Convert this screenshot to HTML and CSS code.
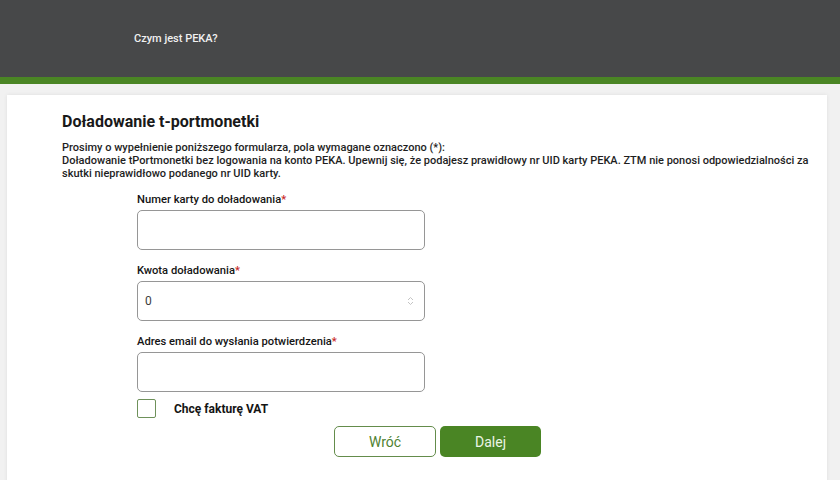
FILE: index.html
```html
<!DOCTYPE html>
<html lang="pl">
<head>
    <meta charset="UTF-8">
    <meta name="viewport" content="width=device-width, initial-scale=1.0">
    <title>Doładowanie t-portmonetki</title>
    <link rel="stylesheet" href="styles.css">
</head>
<body>
    <!-- nagłówek -->
    <header class="top">
        <a class="top-link" href="#">Czym jest PEKA?</a>
    </header>
    <div class="stripe"></div>

    <div class="page">
        <div class="card">
            <h1 class="title">Doładowanie t-portmonetki</h1>
            <p class="info">
                Prosimy o wypełnienie poniższego formularza, pola wymagane oznaczono (*):<br>
                Doładowanie tPortmonetki bez logowania na konto PEKA. Upewnij się, że podajesz prawidłowy nr UID karty PEKA. ZTM nie ponosi odpowiedzialności za skutki nieprawidłowo podanego nr UID karty.
            </p>
            <form class="form">
                <div class="field">
                    <label class="label">Numer karty do doładowania<span class="req">*</span></label>
                    <input class="input" type="text">
                </div>
                <div class="field">
                    <label class="label">Kwota doładowania<span class="req">*</span></label>
                    <div class="input number">
                        <span>0</span>
                        <span class="spin">
                            <svg width="7" height="10" viewBox="0 0 7 10"><path d="M1 4 L3.5 1.5 L6 4 M1 6 L3.5 8.5 L6 6" fill="none" stroke="#c4c4c4" stroke-width="1"/></svg>
                        </span>
                    </div>
                </div>
                <div class="field">
                    <label class="label">Adres email do wysłania potwierdzenia<span class="req">*</span></label>
                    <input class="input" type="text">
                </div>
                <label class="check">
                    <span class="box"></span>
                    <span>Chcę fakturę VAT</span>
                </label>
                <div class="buttons">
                    <button class="btn back" type="button">Wróć</button>
                    <button class="btn next" type="button">Dalej</button>
                </div>
            </form>
        </div>
    </div>
</body>
</html>
```

FILE: styles.css
```css
*{
    padding: 0;
    margin: 0;
    box-sizing: border-box;
}
body{
    width: 840px;
    height: 480px;
    overflow: hidden;
    background-color: rgb(241, 241, 241);
    font-family: Roboto, "Liberation Sans", sans-serif;
    color: rgb(20, 20, 20);
}
.top{
    height: 77px;
    background-color: rgb(71, 72, 73);
    padding: 27px 0 0 134px;
}
.top-link{
    color: rgb(240, 240, 240);
    font-size: 11px;
    font-weight: 500;
    text-decoration: none;
}
.stripe{
    height: 7px;
    background-color: rgb(74, 133, 36);
}
.page{
    padding: 11px 13px 0 7px;
}
.card{
    height: 400px;
    background-color: #fff;
    box-shadow: 0 0 4px rgba(0, 0, 0, 0.08);
    padding: 17px 18px 0 55px;
}
.title{
    font-size: 16px;
    font-weight: 700;
    line-height: 20px;
    color: rgb(25, 25, 25);
}
.info{
    margin-top: 10px;
    font-size: 11px;
    font-weight: 500;
    line-height: 12.8px;
    color: rgb(30, 30, 30);
}
.form{
    width: 288px;
    margin: 13px 0 0 75px;
}
.field{
    margin-bottom: 14px;
}
.label{
    display: block;
    font-size: 11.2px;
    font-weight: 500;
    line-height: 14px;
    margin-bottom: 3px;
}
.req{
    color: rgb(200, 40, 40);
}
.input{
    display: block;
    width: 288px;
    height: 40px;
    border: 1px solid rgb(150, 150, 150);
    border-radius: 5px;
    background-color: #fff;
    font-family: inherit;
}
.number{
    display: flex;
    align-items: center;
    justify-content: space-between;
    padding: 0 10px 0 7px;
    font-size: 12px;
    color: rgb(60, 60, 60);
}
.spin{
    display: flex;
}
.check{
    display: flex;
    align-items: center;
    gap: 18px;
    margin-top: -7px;
    font-size: 12px;
    font-weight: 700;
}
.box{
    width: 19px;
    height: 19px;
    border: 1.5px solid rgb(110, 145, 90);
    border-radius: 2px;
}
.buttons{
    display: flex;
    gap: 4px;
    margin: 8px 0 0 197px;
}
.btn{
    flex: none;
    width: 102px;
    height: 31px;
    border-radius: 5px;
    font-family: inherit;
    font-size: 14px;
    cursor: pointer;
}
.back{
    background-color: #fff;
    border: 1px solid rgb(100, 140, 75);
    color: rgb(80, 130, 50);
}
.next{
    width: 101px;
    background-color: rgb(74, 133, 36);
    border: none;
    color: rgb(235, 245, 230);
}
```
